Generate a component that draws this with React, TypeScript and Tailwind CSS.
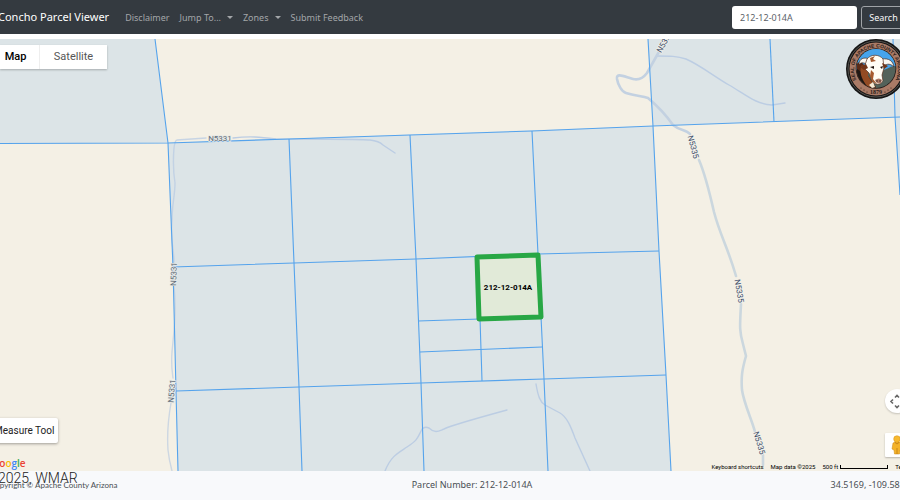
import React from "react";

const road = "#bccde3";
const majorRoad = "#cbd7de";

const parcelLines = [
  "M0 143.5L168 143L289 139L410 135L532 131L653 126L900 117",
  "M155 39L168 143L173 267L176 391L178 471",
  "M289 139L294 263L299 387L302 471",
  "M410 135L416 259L421 383L424 471",
  "M532 131L538 254L544 379L548 471",
  "M648 39L653 126L659 251L666 375L671 471",
  "M173 267L294 263L416 259L538 254L659 251",
  "M176 391L299 387L421 383L544 379L666 375",
  "M418 321L480 319",
  "M420 352L542 347",
  "M480 318L482 381",
  "M770 39L774 122",
  "M893 39L895 117L900 195",
];

const roadLabels = [
  { text: "N5331", x: 220, y: 138, angle: 0, minor: true },
  { text: "N5331", x: 174, y: 274, angle: -88, minor: true },
  { text: "N5331", x: 172, y: 391, angle: -85, minor: true },
  { text: "N53...", x: 664, y: 43, angle: -60, minor: false },
  { text: "N5335", x: 693, y: 147, angle: 75, minor: false },
  { text: "N5335", x: 739, y: 291, angle: 80, minor: false },
  { text: "N5335", x: 759, y: 443, angle: 73, minor: false },
];

function ParcelMap() {
  return (
    <svg
      className="absolute inset-0 h-full w-full"
      viewBox="0 39 900 432"
      preserveAspectRatio="xMidYMid slice"
      role="img"
      aria-label="Parcel map"
    >
      <rect y="39" width="900" height="432" fill="#f4f0e5" />
      <g fill="#dce4e7">
        <path d="M0 39H155L168 143L0 143.5Z" />
        <path d="M168 143L653 126L659 251L666 375L671 471H178L176 391L173 267Z" />
        <path d="M648 39H900V195L895 117L653 126Z" />
      </g>
      <g fill="none" stroke={road} strokeWidth="1.4" strokeLinecap="round">
        <path d="M174 262C174 250 170 240 172 220C172 205 175 195 175 183C173 170 173 160 174 148Q175 140 177 140L206 138" opacity=".8" />
        <path d="M233 138C250 136 260 137 276 139C300 139 360 139 370 140Q379 141 383 145L395 153" />
        <path d="M174 286C177 310 174 330 172 352C171 365 172 370 173 378M171 403C168 420 167 435 168 450Q169 460 172 471" stroke="#cdd7e2" />
        <path d="M385 471C391 456 398 453 407 447C418 440 418 437 422 429Q425 426 429 428C435 434 439 431 444 429Q452 425 507 410" />
        <path d="M536 384C538 396 540 402 545 405L560 413C567 417 571 427 575 438L590 471" />
        <path d="M657 56C670 56 677 56 686 59C700 65 715 77 729 85C745 94 755 104 772 105L785 103" />
      </g>
      <g fill="none" strokeWidth="2.6" strokeLinecap="round">
        <path
          d="M660 50L647 73Q641 81 633 79C625 77 616 72 617 79C618 85 622 92 626 93C635 96 642 96 648 98C660 108 666 115 673 125C680 131 686 129 690 134"
          stroke="#c3d1e1"
        />
        <path d="M699 160C705 174 709 190 714 212C720 235 728 248 736 276M741 304C740 325 739 330 743 344L746 356C742 370 741 377 742 390C744 404 752 420 755 432M763 455V465" stroke={majorRoad} />
      </g>
      <g fill="none" stroke="#55a3ec" strokeWidth="1.1">
        {parcelLines.map((d) => (
          <path key={d} d={d} />
        ))}
      </g>
      <path
        d="M477 257L538 255L541 317L479 319Z"
        fill="#e1ead8"
        stroke="#28a745"
        strokeWidth="5"
        strokeLinejoin="round"
      />
      <g fontFamily="Roboto, sans-serif" textAnchor="middle" dominantBaseline="central">
        {roadLabels.map((l) => (
          <text
            key={`${l.x}-${l.y}`}
            x={l.x}
            y={l.y}
            fontSize="8"
            transform={`rotate(${l.angle} ${l.x} ${l.y})`}
            fill={l.minor ? "#626c78" : "#3c4a66"}
            stroke={l.minor ? "#e5e8e5" : "#f0f0ea"}
            strokeWidth="1.5"
            paintOrder="stroke"
          >
            {l.text}
          </text>
        ))}
        <text x="508" y="287" fontSize="8" fontWeight="700" fill="#000">
          212-12-014A
        </text>
      </g>
    </svg>
  );
}

function CountySeal() {
  return (
    <svg className="absolute top-0 -right-1.5 size-15" viewBox="0 0 60 60" role="img" aria-label="Seal of Apache County Arizona">
      <defs>
        <path id="seal-top" d="M13.5 45A22 22 0 1 1 46.500 45" />
        <clipPath id="seal-center">
          <circle cx="30" cy="29.5" r="19.5" />
        </clipPath>
      </defs>
      <circle cx="30" cy="30" r="30" fill="#151515" />
      <circle cx="30" cy="30" r="28" fill="none" stroke="#55534f" strokeWidth="1" />
      <circle cx="30" cy="30" r="26.5" fill="#a97a66" />
      <circle cx="30" cy="29.5" r="20.3" fill="#241b18" />
      <g clipPath="url(#seal-center)">
        <rect x="9" y="9" width="42" height="42" fill="#53625a" />
        <path d="M8 8H52V28C45 25 42 31 35 31H8Z" fill="#46a4ec" />
        <path d="M10 25C16 20 20 27 20 34L30 48L28 54H10Z" fill="#5b2b17" />
        <path d="M11 30L17 34L20 46L29 50L19 52L10 43Z" fill="#1e1714" />
        <path d="M15 27C20 25 23 31 22 37L28 46L23 49C17 43 13 35 15 27Z" fill="#934b24" />
      </g>
      <path d="M13 26C13 19 18 18 24 20L36 20C43 19 47 22 48 28C43 23 40 26 36 27L22 26C17 23 15 23 13 26Z" fill="#faf9f2" stroke="#40271b" strokeWidth=".7" />
      <path d="M21 20C25 15 33 15 37 20L38 29L36 36L37 42C34 47 28 46 26 41L23 34L18 29Z" fill="#fffdf5" stroke="#57301f" strokeWidth=".7" />
      <path d="M20 25L14 28L18 31L22 29ZM36 24L42 27L38 30Z" fill="#713619" />
      <path d="M24 19L29 17L27 20L30 22L25 23ZM25 31L28 34L27 40L31 45L27 43L24 37Z" fill="#a65b30" />
      <path d="M24 28L28 27L28 30ZM34 28L37 27L36 30Z" fill="#21140e" />
      <path d="M29 41Q33 38 36 41L35 44Q31 46 29 41Z" fill="#ac7967" />
      <circle cx="31" cy="42" r=".7" fill="#221611" />
      <circle cx="34" cy="42" r=".7" fill="#221611" />
      <path d="M23 46L27 43L29 48L26 49Z" fill="#f6ead5" />
      <text fontSize="5" fontFamily="Liberation Sans, sans-serif" fontWeight="700" fill="#2a1c18">
        <textPath href="#seal-top" startOffset="50%" textAnchor="middle">
          SEAL OF APACHE COUNTY ARIZONA
        </textPath>
      </text>
      <text x="30" y="55" fontSize="6" textAnchor="middle" fontFamily="Liberation Serif, serif" fontWeight="700" fill="#2a1c18">
        1879
      </text>
      <g fill="#2a1c18">
        <circle cx="15" cy="49" r=".6" />
        <circle cx="18" cy="51" r=".6" />
        <circle cx="21" cy="53" r=".6" />
        <circle cx="39" cy="53" r=".6" />
        <circle cx="42" cy="51" r=".6" />
        <circle cx="45" cy="49" r=".6" />
      </g>
    </svg>
  );
}

function NavDropdown({ label }: { label: string }) {
  return (
    <button type="button" className="flex items-center gap-1.5 whitespace-nowrap">
      {label}
      <span className="border-x-3 border-t-3 border-x-transparent border-t-current" />
    </button>
  );
}

function Header() {
  return (
    <header className="flex h-[34px] shrink-0 items-center overflow-hidden bg-[#343a40] pt-px font-['Noto_Sans',sans-serif] text-[9px] text-[#a3a6a9]">
      <a href="#" className="-ml-0.5 shrink-0 text-[11px] whitespace-nowrap text-white">
        Concho Parcel Viewer
      </a>
      <nav className="ml-4 flex shrink-0 items-center gap-2.5">
        <a href="#disclaimer">Disclaimer</a>
        <NavDropdown label="Jump To..." />
        <NavDropdown label="Zones" />
        <a href="#feedback">Submit Feedback</a>
      </nav>
      <form className="-mr-1.5 ml-auto flex shrink-0 gap-1" onSubmit={(e) => e.preventDefault()}>
        <input
          aria-label="Parcel number"
          defaultValue="212-12-014A"
          className="h-[23px] w-[125px] rounded-[3px] bg-white px-2 text-[#5c6268]"
        />
        <button type="submit" className="h-[23px] w-[45px] rounded-[3px] border border-[#9fa3a7] text-[#f8f9fa]">
          Search
        </button>
      </form>
    </header>
  );
}

function MapTypeControl() {
  return (
    <div className="absolute top-1.5 left-0 flex h-6 bg-white text-[11px] shadow-[0_1px_2px_rgba(0,0,0,0.25)]">
      <button type="button" className="w-10 border-r border-[#eeeeee] pt-px pr-2 text-center font-medium text-black">
        Map
      </button>
      <button type="button" className="w-[67px] pt-px text-[#565656]">
        Satellite
      </button>
    </div>
  );
}

function GoogleLogo() {
  return (
    <div className="absolute bottom-0 -left-2 flex font-['Open_Sans',sans-serif] text-[10px] leading-4 font-semibold" aria-label="Google">
      <span className="text-[#4285f4]">G</span>
      <span className="text-[#ea4335]">o</span>
      <span className="text-[#fbbc05]">o</span>
      <span className="text-[#4285f4]">g</span>
      <span className="text-[#34a853]">l</span>
      <span className="text-[#ea4335]">e</span>
    </div>
  );
}

function CameraButton() {
  return (
    <button
      type="button"
      aria-label="Map camera controls"
      className="absolute right-[-9px] bottom-[58px] size-6 rounded-full bg-white shadow-[0_1px_2px_rgba(0,0,0,0.2)]"
    >
      <svg viewBox="0 0 24 24" className="size-6" fill="none" stroke="#666" strokeWidth="1.6">
        <path d="M10 8.500L12 6.500L14 8.500M10 16.500L12 18.500L14 16.500M8 10.500L6 12.500L8 14.500M16 10.500L18 12.500L16 14.500" />
      </svg>
    </button>
  );
}

function PegmanButton() {
  return (
    <button
      type="button"
      aria-label="Street View"
      className="absolute right-[-9px] bottom-3.5 size-6 rounded-[1px] bg-white shadow-[0_1px_2px_rgba(0,0,0,0.25)]"
    >
      <svg viewBox="0 0 24 24" className="size-6">
        <path d="M8 10Q12 7 16 10L17 16L15 17L14.500 21H9.500L9 17L7 16Z" fill="#f4b229" stroke="#c88715" strokeWidth=".5" />
        <circle cx="12" cy="6" r="3.300" fill="#f8b92d" stroke="#d2901b" strokeWidth=".5" />
        <path d="M10 9.500L12 11L14 9.500M12 15V21" fill="none" stroke="#bd7b15" strokeWidth=".8" />
      </svg>
    </button>
  );
}

function Attribution() {
  return (
    <div className="absolute right-[-12px] bottom-0 flex h-2 items-center gap-[7px] text-[6px] leading-2 whitespace-nowrap text-black">
      <button type="button">Keyboard shortcuts</button>
      <span>Map data ©2025</span>
      <span className="flex items-center gap-0.5">
        500 ft
        <span className="h-1 w-12 border-x border-b border-black" />
      </span>
      <a href="#terms">Terms</a>
    </div>
  );
}

function Footer() {
  return (
    <footer className="relative grid h-[29px] shrink-0 grid-cols-3 bg-[#f8f9fb] pb-0.5 font-['Noto_Sans',sans-serif] text-[#4a4f54]">
      <span className="absolute top-0 -left-0.5 font-['Roboto',sans-serif] text-[14px] leading-[14px] font-light text-[#222]">
        2025, WMAR
      </span>
      <span className="relative -ml-2.5 self-center font-['Lato',sans-serif] text-[8px] whitespace-nowrap">
        Copyright © Apache County Arizona
      </span>
      <span className="self-center pl-11 text-center text-[9px] whitespace-nowrap">Parcel Number: 212-12-014A</span>
      <span className="-mr-2.5 self-center text-right text-[9px] whitespace-nowrap">34.5169, -109.5813</span>
    </footer>
  );
}

export default function App() {
  return (
    <div className="flex h-screen flex-col overflow-hidden bg-white font-['Roboto',sans-serif]">
      <Header />
      <main className="relative mt-[5px] min-h-0 flex-1 overflow-hidden">
        <ParcelMap />
        <MapTypeControl />
        <CountySeal />
        <button
          type="button"
          className="absolute bottom-7 -left-2.5 h-[25px] rounded-[2px] bg-white px-1 text-[10px] text-[#222] shadow-[0_1px_3px_rgba(0,0,0,0.35)]"
        >
          Measure Tool
        </button>
        <GoogleLogo />
        <CameraButton />
        <PegmanButton />
        <Attribution />
      </main>
      <Footer />
    </div>
  );
}
